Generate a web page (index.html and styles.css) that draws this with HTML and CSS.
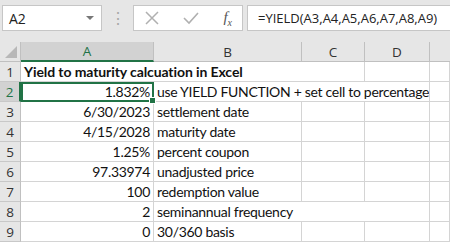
FILE: index.html
```html
<!DOCTYPE html>
<html lang="en">
<head>
    <meta charset="UTF-8">
    <title>Yield to maturity</title>
    <link rel="stylesheet" href="styles.css">
</head>
<body>

<div class="toolbar">
    <div class="namebox">
        <span>A2</span>
        <span class="arrow"></span>
    </div>
    <div class="dots">&#8942;</div>
    <div class="buttons">
        <svg width="14" height="14" viewBox="0 0 14 14"><path d="M1 1 L13 13 M13 1 L1 13" stroke="#b0b0b0" stroke-width="1.5" fill="none"/></svg>
        <svg width="16" height="14" viewBox="0 0 16 14"><path d="M1 7 L6 12 L15 2" stroke="#b0b0b0" stroke-width="1.6" fill="none"/></svg>
        <span class="fx">f<sub>x</sub></span>
    </div>
    <div class="formula">=YIELD(A3,A4,A5,A6,A7,A8,A9)</div>
</div>

<div class="sheet">
    <div class="hd corner"><span class="tri"></span></div>
    <div class="hd col selcol">A</div>
    <div class="hd col">B</div>
    <div class="hd col">C</div>
    <div class="hd col">D</div>
    <div class="hd col last"></div>

    <div class="hd row">1</div>
    <div class="cell bold wide">Yield to maturity calcuation in Excel</div>
    <div class="cell"></div><div class="cell"></div><div class="cell"></div>

    <div class="hd row selrow">2</div>
    <div class="cell num active">1.832%<span class="handle"></span></div>
    <div class="cell wide">use YIELD FUNCTION + set cell to percentage</div>
    <div class="cell"></div><div class="cell"></div>

    <div class="hd row">3</div>
    <div class="cell num">6/30/2023</div>
    <div class="cell">settlement date</div>
    <div class="cell"></div><div class="cell"></div><div class="cell"></div>

    <div class="hd row">4</div>
    <div class="cell num">4/15/2028</div>
    <div class="cell">maturity date</div>
    <div class="cell"></div><div class="cell"></div><div class="cell"></div>

    <div class="hd row">5</div>
    <div class="cell num">1.25%</div>
    <div class="cell">percent coupon</div>
    <div class="cell"></div><div class="cell"></div><div class="cell"></div>

    <div class="hd row">6</div>
    <div class="cell num">97.33974</div>
    <div class="cell">unadjusted price</div>
    <div class="cell"></div><div class="cell"></div><div class="cell"></div>

    <div class="hd row">7</div>
    <div class="cell num">100</div>
    <div class="cell">redemption value</div>
    <div class="cell"></div><div class="cell"></div><div class="cell"></div>

    <div class="hd row">8</div>
    <div class="cell num">2</div>
    <div class="cell wide">seminannual frequency</div>
    <div class="cell"></div><div class="cell"></div>

    <div class="hd row">9</div>
    <div class="cell num">0</div>
    <div class="cell">30/360 basis</div>
    <div class="cell"></div><div class="cell"></div><div class="cell"></div>
</div>

</body>
</html>
```

FILE: styles.css
```css
body {
    margin: 0;
    width: 450px;
    height: 245px;
    overflow: hidden;
    background: #fff;
    font-family: Lato, sans-serif;
}
.toolbar {
    height: 42px;
    background: #e6e6e6;
    display: flex;
    align-items: flex-start;
    padding-top: 5px;
    box-sizing: border-box;
}
.namebox {
    flex-shrink: 0;
    margin-left: 2px;
    width: 100px;
    height: 26px;
    box-sizing: border-box;
    background: #fff;
    border: 1px solid #c6c6c6;
    display: flex;
    align-items: center;
    justify-content: space-between;
    padding: 0 7px 0 6px;
    font-family: "Open Sans", sans-serif;
    font-size: 14px;
    color: #222;
}
.arrow {
    width: 0;
    height: 0;
    border-left: 4px solid transparent;
    border-right: 4px solid transparent;
    border-top: 4px solid #777;
}
.dots {
    flex-shrink: 0;
    width: 31px;
    text-align: center;
    color: #a8a8a8;
    font-size: 16px;
    line-height: 26px;
}
.buttons {
    flex-shrink: 0;
    width: 110px;
    height: 26px;
    box-sizing: border-box;
    background: #fff;
    border: 1px solid #c6c6c6;
    display: flex;
    align-items: center;
    justify-content: space-between;
    padding: 0 10px 0 11px;
}
.fx {
    font-family: "Liberation Serif", serif;
    font-style: italic;
    font-size: 15px;
    color: #555;
}
.fx sub {
    font-size: 10px;
}
.formula {
    margin-left: 4px;
    flex: 1;
    min-width: 0;
    height: 26px;
    box-sizing: border-box;
    background: #fff;
    border: 1px solid #c6c6c6;
    border-right: none;
    padding-left: 10px;
    font-family: "Open Sans", sans-serif;
    font-size: 13px;
    line-height: 24px;
    color: #222;
    white-space: nowrap;
    overflow: hidden;
}
.sheet {
    display: grid;
    grid-template-columns: 21px 133px 148px 63px 65px 1fr;
    grid-auto-rows: 20px;
}
.hd {
    background: #e6e6e6;
    color: #333;
    font-family: "Open Sans", sans-serif;
    font-size: 13.5px;
    display: flex;
    align-items: center;
    justify-content: center;
    box-sizing: border-box;
}
.col {
    border-right: 1px solid #c0c0c0;
    border-bottom: 1px solid #c0c0c0;
}
.col.last {
    border-right: none;
}
.row {
    border-right: 1px solid #c0c0c0;
    border-bottom: 1px solid #c8c8c8;
}
.corner {
    border-right: 1px solid #c0c0c0;
    border-bottom: 1px solid #c0c0c0;
    position: relative;
}
.tri {
    position: absolute;
    right: 3px;
    bottom: 3px;
    width: 0;
    height: 0;
    border-left: 12px solid transparent;
    border-bottom: 12px solid #b8b8b8;
}
.selcol {
    background: #d2d2d2;
    color: #217346;
    border-bottom: 2px solid #217346;
}
.selrow {
    background: #d2d2d2;
    color: #217346;
    border-right: 2px solid #217346;
}
.cell {
    border-right: 1px solid #d4d4d4;
    border-bottom: 1px solid #d4d4d4;
    box-sizing: border-box;
    font-size: 14px;
    letter-spacing: -0.3px;
    line-height: 19px;
    padding: 0 3px;
    color: #111;
    white-space: nowrap;
    overflow: visible;
}
.wide {
    grid-column: span 2;
}
.cell.wide {
    border-right: none;
}
.bold {
    font-weight: bold;
    letter-spacing: -0.1px;
}
.num {
    text-align: right;
}
.active {
    border: 2px solid #217346;
    line-height: 16px;
    padding-right: 2px;
    position: relative;
}
.handle {
    position: absolute;
    right: -4px;
    bottom: -4px;
    width: 5px;
    height: 5px;
    background: #217346;
    border: 1px solid #fff;
}
```
